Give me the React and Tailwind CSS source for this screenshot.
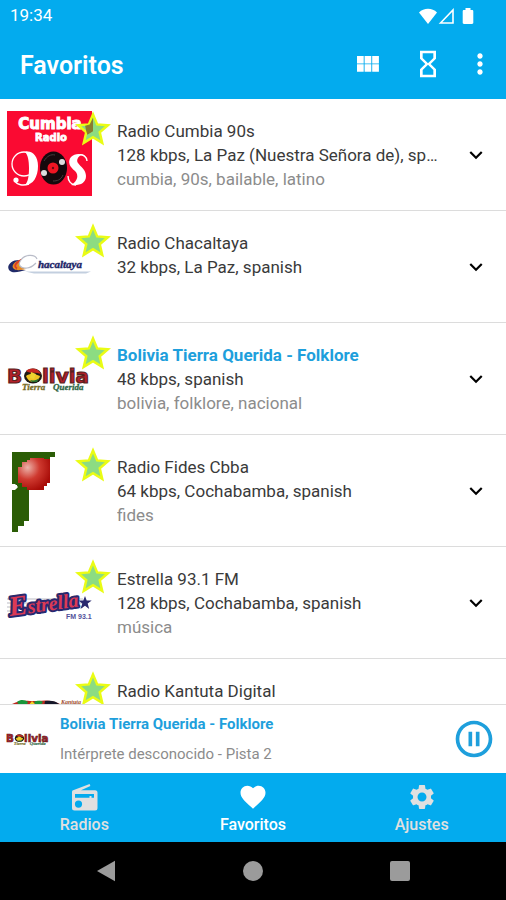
import React, { useState } from "react";
import {
  MdHourglassEmpty,
  MdMoreVert,
  MdFavorite,
  MdSettings,
  MdPauseCircleOutline,
  MdPlayCircleOutline,
  MdExpandMore,
} from "react-icons/md";

function CumbiaLogo() {
  return (
    <svg viewBox="0 0 85 85" className="w-full">
      <rect width="85" height="85" fill="#fa0a32" />
      <g fill="#fff" textAnchor="middle">
        <text x="43" y="18" fontSize="15" fontWeight="900" fontFamily="DejaVu Sans, sans-serif" stroke="#fff" strokeWidth="1">
          Cumbia
        </text>
        <text x="44" y="30" fontSize="10" fontWeight="900" fontFamily="DejaVu Sans, sans-serif" stroke="#fff" strokeWidth="0.8">
          Radio
        </text>
      </g>
      {/* big 9 */}
      <circle cx="17" cy="53" r="12" fill="none" stroke="#fff" strokeWidth="1.3" />
      <path d="M18 41c7-2 13 4 13 14 0 11-5 19-13 19 3-3 4-9 4-17 0-7-1-13-4-16z" fill="#fff" />
      <path d="M22 73c-6 2-12 1-14-3" fill="none" stroke="#fff" strokeWidth="1.5" />
      <circle cx="9" cy="69" r="2.6" fill="#fff" />
      {/* vinyl record */}
      <ellipse cx="46.5" cy="57" rx="13.5" ry="16.5" fill="#15090c" />
      <path d="M37 50c3-5 7-7 11-6M56 64c-2 5-6 6-10 6" fill="none" stroke="#453c3e" strokeWidth="1" />
      <circle cx="46" cy="57" r="5.5" fill="#f01522" />
      <circle cx="46" cy="57" r="1.2" fill="#6d0b13" />
      <circle cx="37" cy="62" r="3" fill="#ddd" />
      <circle cx="55" cy="51" r="3" fill="#ddd" />
      {/* big s */}
      <path d="M79 46c-4-4-11-4-15 0-4 5-1 10 4 14 4 4 3 10-4 14 9 1 15-2 15-9 0-6-5-9-8-13-2-3 0-6 3-8" fill="#fff" />
      <path d="M61 65c0 5 3 9 8 9M72 44c4-1 8 2 8 6" fill="none" stroke="#fff" strokeWidth="1.4" />
    </svg>
  );
}

function ChacaltayaLogo() {
  return (
    <svg viewBox="0 0 85 85" className="w-full">
      <path d="M14 37C5 36-1 42 2 47c3 4 10 2 17 0-7 0-11-3-5-10z" fill="#202a68" />
      <path d="M14 36.5C8 38 3 43 7 46c3 2 7 1 12 0-6-2-6-6-1-9z" fill="#e98b22" />
      <path d="M16 36C9 39 6 43 10 45.5" fill="none" stroke="#d83b2b" strokeWidth="1.8" />
      <path d="M30 36c-2-5-12-5-16 1-4 5 0 9 6 8 4 0 7-3 9-5" fill="#fff" stroke="#b9bcc8" strokeWidth="1.2" />
      <path d="M18 48.5h66l-5 2H27z" fill="#c3cfdf" />
      <text x="31" y="45" fontSize="11" fontWeight="700" fontStyle="italic" fontFamily="Liberation Serif, serif" fill="#1d2668" stroke="#1d2668" strokeWidth="0.4">
        hacaltaya
      </text>
    </svg>
  );
}

function BoliviaLogo() {
  return (
    <svg viewBox="0 0 85 85" className="w-full">
      <g fontSize="20" fontWeight="900" fontFamily="DejaVu Sans, sans-serif" fill="#b3202a" stroke="#5b1f20" strokeWidth="1.2">
        <text x="0" y="48">B</text>
        <text x="35" y="48">livia</text>
      </g>
      <ellipse cx="26" cy="41" rx="9" ry="7.5" fill="#1c1a14" />
      <path d="M19 36c5-4 12-3 15 3-5-2-10 0-15-3z" fill="#c52720" />
      <path d="M19 41c4-3 9-2 14 0-1 4-4 6-7 6s-6-3-7-6z" fill="#efc423" />
      <path d="M24 37l5 2-2 5-4-1z" fill="#ecd431" />
      <path d="M23 45c4 1 7 0 9-2l-2 4h-5z" fill="#2a7333" />
      <g fontSize="9" fontWeight="700" fontStyle="italic" fontFamily="Liberation Serif, serif">
        <text x="15" y="55" fill="#776b24" stroke="#776b24" strokeWidth="0.3">Tierra</text>
        <text x="46" y="55" fill="#2d6544" stroke="#2d6544" strokeWidth="0.3">Querida</text>
      </g>
    </svg>
  );
}

function FidesLogo() {
  return (
    <svg viewBox="0 0 85 85" className="w-full">
      <defs>
        <radialGradient id="fidesBall" cx="0.3" cy="0.3" r="0.75">
          <stop offset="0" stopColor="#ecb3aa" />
          <stop offset="0.5" stopColor="#cf3a30" />
          <stop offset="1" stopColor="#a90d08" />
        </radialGradient>
      </defs>
      <path d="M5 5h43v5h-5v6H21v17h-3l4 7v34h-5v5h-6v6H5V43l5-2v-3H5z" fill="#2b5d06" />
      <path d="M23 11h14v1h6v24h-3v3h-3v4H20v-3h-5v-4h-4V20h4v-5h5v-2h3z" fill="url(#fidesBall)" />
      <path d="M4 37h4l3 3-3 3H4z" fill="#fff" />
    </svg>
  );
}

function EstrellaLogo() {
  return (
    <svg viewBox="0 0 85 85" className="w-full">
      <path d="M0 40h76M0 44h76M0 48h76M0 52h12" stroke="#a9a9b6" strokeWidth="0.8" />
      <text
        x="3"
        y="57"
        transform="rotate(-8 3 57)"
        fontWeight="700"
        fontStyle="italic"
        fontFamily="Liberation Serif, serif"
        fill="#dc3a55"
        stroke="#29296f"
        strokeWidth="4"
        strokeLinejoin="round"
        paintOrder="stroke"
      >
        <tspan fontSize="28">E</tspan>
        <tspan fontSize="20">strella</tspan>
      </text>
      <path d="M78 37l1.700 4.500h5l-4 3 1.500 5.500-4.200-3.300-4.500 3.300 1.800-5.500-4-3h5z" fill="#29296f" />
      <text x="59" y="60" fontSize="7" fontWeight="700" fontFamily="Liberation Sans, sans-serif" fill="#50509a">
        FM 93.1
      </text>
    </svg>
  );
}

function KantutaLogo() {
  return (
    <svg viewBox="0 0 85 85" className="w-full">
      <path d="M5 33c5-3 12-4 18-3h8c7-1 15-1 22 3v6H5z" fill="#bd281f" />
      <path d="M10 31c4-3 8-2 11 0l-2 4h-6z" fill="#19963a" />
      <path d="M21 35l4-5 5 5z" fill="#f2d326" />
      <path d="M27 31c4-2 7-1 9 0l-3 4h-4z" fill="#19963a" />
      <path d="M38 30c6-1 11 0 14 3v3H37z" fill="#151729" />
      <text x="54" y="33" fontSize="6" fontWeight="700" fontStyle="italic" fontFamily="Liberation Serif, serif" fill="#9e4929">
        Kantuta
      </text>
    </svg>
  );
}

function Star({ over }) {
  return (
    <svg viewBox="2 2 32 32" className="absolute top-0 left-[68px] size-9">
      <path
        d="M18 5l3.700 8.900 9.600.8-7.300 6.200 2.200 9.400-8.200-5-8.200 5 2.200-9.400-7.300-6.200 9.600-.8z"
        fill="#8cdc82"
        stroke="#eafc14"
        strokeWidth="2.200"
      />
      {over && <path d="M11 15l4-1 3-6v12l-5 3-1-3z" fill="#8a6a20" opacity="0.85" />}
    </svg>
  );
}

function RadioIcon({ size }) {
  return (
    <svg viewBox="0 0 30 30" width={size} height={size} fill="currentColor">
      <path
        fillRule="evenodd"
        d="M3.500 8.600L20.600 2l.8 1.900-9.400 4.300H26a2.500 2.500 0 012.500 2.500v15.200a2.500 2.500 0 01-2.500 2.500H5.500A2.500 2.500 0 013 25.900V10.500c0-.8.100-1.500.5-1.900zM6 12v3.700h14.500V14h2v1.700H25V12zM9.500 18.500a3.600 3.600 0 100 7.200 3.600 3.600 0 000-7.200z"
      />
    </svg>
  );
}

const stations = [
  {
    name: "Radio Cumbia 90s",
    info: "128 kbps, La Paz (Nuestra Señora de), spanish",
    tags: "cumbia, 90s, bailable, latino",
    Logo: CumbiaLogo,
    over: true,
  },
  {
    name: "Radio Chacaltaya",
    info: "32 kbps, La Paz, spanish",
    tags: "",
    Logo: ChacaltayaLogo,
  },
  {
    name: "Bolivia Tierra Querida - Folklore",
    info: "48 kbps, spanish",
    tags: "bolivia, folklore, nacional",
    Logo: BoliviaLogo,
    playing: true,
  },
  {
    name: "Radio Fides Cbba",
    info: "64 kbps, Cochabamba, spanish",
    tags: "fides",
    Logo: FidesLogo,
  },
  {
    name: "Estrella 93.1 FM",
    info: "128 kbps, Cochabamba, spanish",
    tags: "música",
    Logo: EstrellaLogo,
  },
  {
    name: "Radio Kantuta Digital",
    info: "",
    tags: "",
    Logo: KantutaLogo,
  },
];

const tabs = [
  { label: "Radios", Icon: RadioIcon },
  { label: "Favoritos", Icon: MdFavorite },
  { label: "Ajustes", Icon: MdSettings },
];

function StatusBar() {
  return (
    <div className="flex h-8 items-center justify-between pr-8 pl-[10px]">
      <span className="text-[17px]">19:34</span>
      <div className="flex items-center">
        <svg viewBox="0 0 20 16" className="h-4 w-5" fill="currentColor">
          <path d="M10 16L1 4.600C3.500 2 6.500.8 10 .8s6.500 1.200 9 3.800z" />
        </svg>
        <svg viewBox="0 0 16 16" className="size-4" fill="none" stroke="currentColor" strokeWidth="1.600">
          <path d="M2.500 15L15 2v13z" />
        </svg>
        <svg viewBox="0 0 12 18" className="ml-2 h-[18px] w-3" fill="currentColor">
          <path d="M3.500 1h5v2H10c.8 0 1.300.5 1.300 1.200v11.600c0 .7-.5 1.200-1.300 1.200H2C1.200 17 .7 16.500.7 15.800V4.200C.7 3.500 1.200 3 2 3h1.500z" />
        </svg>
      </div>
    </div>
  );
}

function StationRow({ station }) {
  const { name, info, tags, Logo, playing, over } = station;
  return (
    <li className="flex h-28 shrink-0 border-b border-[#dcdcdc] pl-[7px]">
      <div className="relative mt-3 w-[85px] shrink-0">
        <Logo />
        <Star over={over} />
      </div>
      <div className="ml-[25px] min-w-0 flex-1 pt-5 pr-2 text-[17px] leading-6">
        <h2 className={playing ? "truncate font-bold text-[#1e9fdc]" : "truncate text-[#3a3a3a]"}>
          {name}
        </h2>
        <p className="truncate text-[#3a3a3a]">{info}</p>
        <p className="truncate text-[#8c8c8c]">{tags}</p>
      </div>
      <button className="mr-1.5 flex w-12 shrink-0 items-center justify-center text-black" aria-label="Más">
        <MdExpandMore size={26} />
      </button>
    </li>
  );
}

function App() {
  const [activeTab, setActiveTab] = useState("Favoritos");
  const [isPlaying, setIsPlaying] = useState(true);

  return (
    <div className="flex h-screen flex-col bg-white font-[Roboto,sans-serif]">
      <header className="h-[99px] shrink-0 bg-[#03abee] text-white">
        <StatusBar />
        <div className="flex h-16 items-center pr-[10px] pl-5">
          <h1 className="flex-1 pt-1 text-[25px] font-semibold">Favoritos</h1>
          <button aria-label="Vista" className="mr-8">
            <svg viewBox="0 0 24 18" className="h-[18px] w-6" fill="currentColor">
              <path d="M1 1h6.700v7.400H1zM8.600 1h6.700v7.400H8.600zM16.200 1h6.700v7.400h-6.700zM1 9.300h6.700v7.400H1zM8.600 9.300h6.700v7.400H8.600zM16.200 9.300h6.700v7.400h-6.700z" />
            </svg>
          </button>
          <button aria-label="Temporizador" className="mr-5">
            <MdHourglassEmpty size={32} />
          </button>
          <button aria-label="Opciones">
            <MdMoreVert size={32} />
          </button>
        </div>
      </header>

      <ul className="flex min-h-0 flex-1 flex-col overflow-y-auto [scrollbar-width:none]">
        {stations.map((station) => (
          <StationRow key={station.name} station={station} />
        ))}
      </ul>

      <section className="flex h-[69px] shrink-0 items-center border-t border-[#dcdcdc] bg-white pr-[10px] pl-1.5">
        <div className="w-11 shrink-0">
          <BoliviaLogo />
        </div>
        <div className="ml-[10px] min-w-0 flex-1">
          <p className="truncate text-[15px] leading-[30px] font-bold text-[#1e9fdc]">
            Bolivia Tierra Querida - Folklore
          </p>
          <p className="truncate text-[15px] leading-[30px] text-[#8c8c8c]">
            Intérprete desconocido - Pista 2
          </p>
        </div>
        <button
          onClick={() => setIsPlaying(!isPlaying)}
          className="text-[#1e9fdc]"
          aria-label={isPlaying ? "Pausar" : "Reproducir"}
        >
          {isPlaying ? <MdPauseCircleOutline size={44} /> : <MdPlayCircleOutline size={44} />}
        </button>
      </section>

      <nav className="grid h-[69px] shrink-0 grid-cols-3 bg-[#03abee]">
        {tabs.map(({ label, Icon }) => (
          <button
            key={label}
            onClick={() => setActiveTab(label)}
            className={
              activeTab === label
                ? "flex flex-col items-center pt-[9px] text-white"
                : "flex flex-col items-center pt-[9px] text-[#e0e0e0]"
            }
          >
            <Icon size={30} />
            <span className="mt-[3px] text-base leading-5 font-medium">{label}</span>
          </button>
        ))}
      </nav>

      <div className="flex h-[58px] shrink-0 items-center justify-between bg-black px-24">
        <button aria-label="Atrás">
          <svg viewBox="0 0 20 22" className="h-[22px] w-5" fill="#9b9b9b">
            <path d="M19 .8v20.400L1 11z" />
          </svg>
        </button>
        <button aria-label="Inicio" className="size-5 rounded-full bg-[#9b9b9b]" />
        <button aria-label="Recientes" className="size-5 rounded-xs bg-[#9b9b9b]" />
      </div>
    </div>
  );
}

export default App;
